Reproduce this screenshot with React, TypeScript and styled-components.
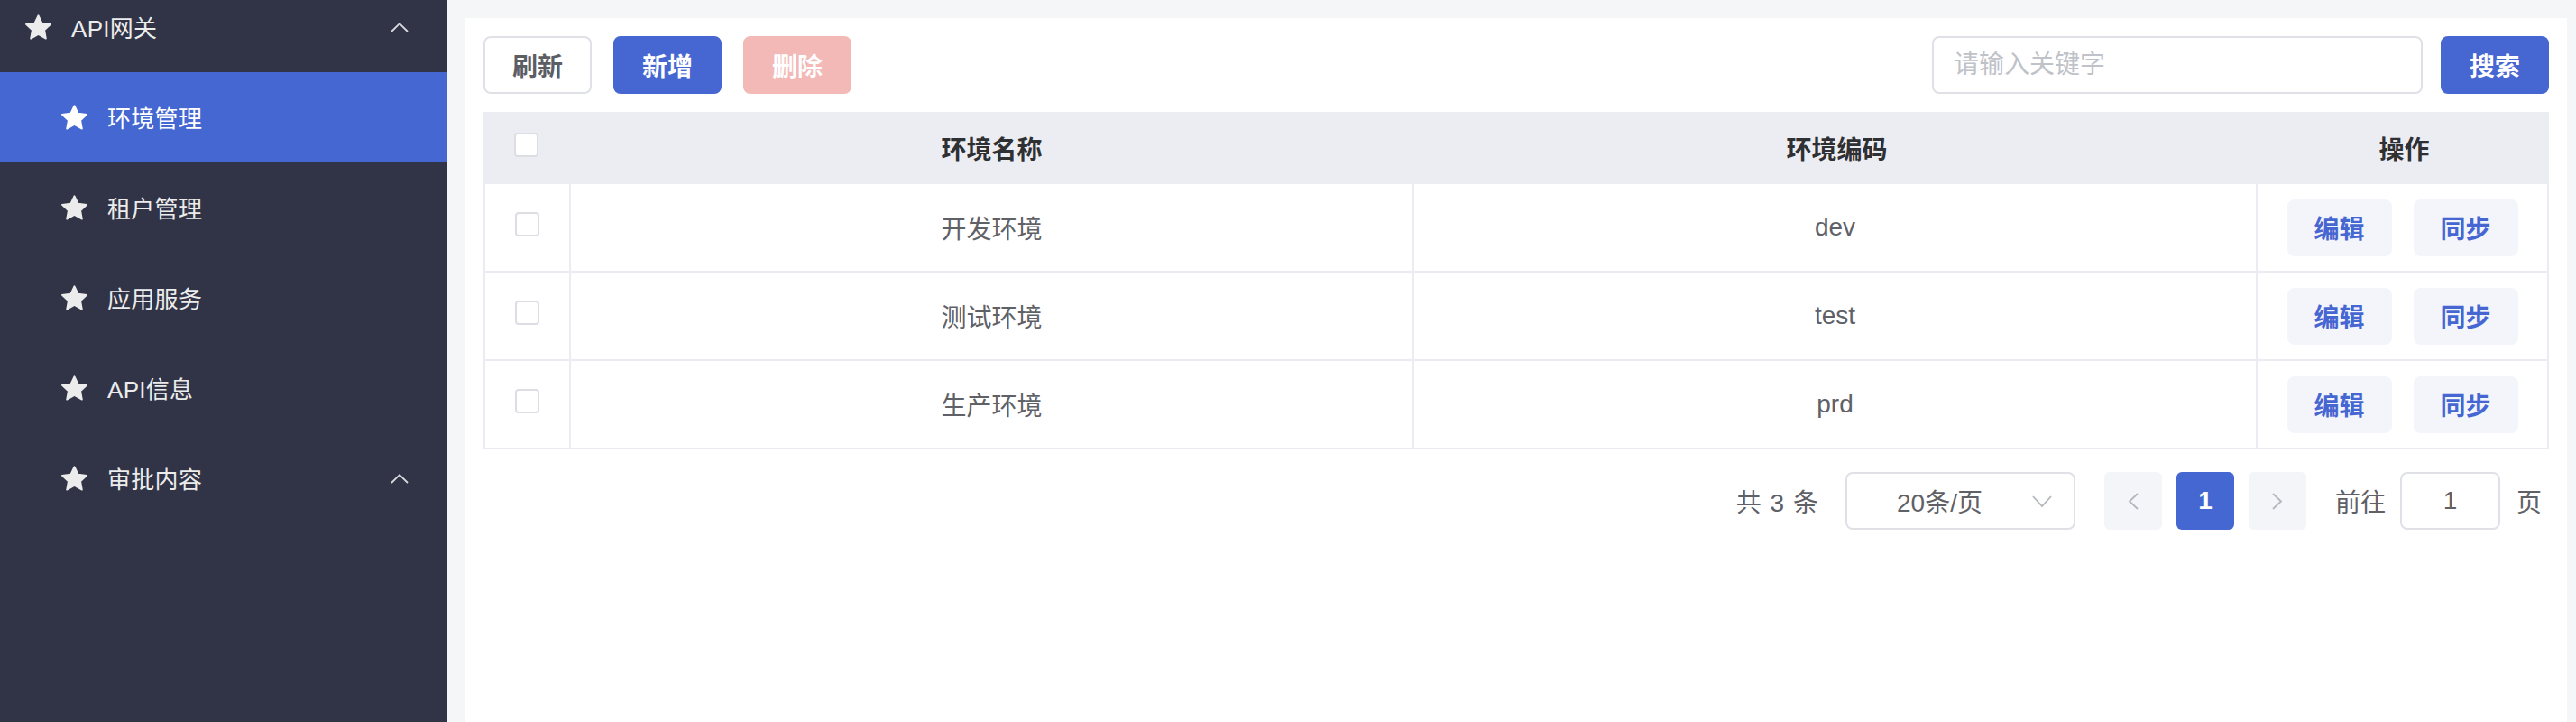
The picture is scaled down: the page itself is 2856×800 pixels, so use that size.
import React from "react";
import styled, { createGlobalStyle } from "styled-components";

const GlobalStyle = createGlobalStyle`
  html, body { margin: 0; padding: 0; }
  body {
    font-family: "Liberation Sans", "Noto Sans CJK SC", sans-serif;
    background: #f5f6f7;
  }
  * { box-sizing: border-box; }
`;

const Layout = styled.div`
  display: flex;
  width: 2856px;
  height: 800px;
  overflow: hidden;
`;

const Sidebar = styled.aside`
  width: 496px;
  flex-shrink: 0;
  background: #313446;
  overflow: hidden;
`;

const Menu = styled.ul`
  list-style: none;
  margin: -20px 0 0 0;
  padding: 0;
`;

const MenuItem = styled.li<{ $level: number; $active?: boolean }>`
  display: flex;
  align-items: center;
  height: 100px;
  padding-left: ${(p) => (p.$level === 0 ? 28 : 68)}px;
  padding-right: 43px;
  gap: 22px;
  background: ${(p) => (p.$active ? "#4567d2" : "transparent")};
  color: ${(p) => (p.$active ? "#ffffff" : "#ececec")};
  font-size: 26px;
  letter-spacing: 0.3px;
`;

const MenuLabel = styled.span`
  flex: 1;
  padding-bottom: 2px;
`;

const StarIcon = styled.svg`
  width: 29px;
  height: 28px;
  flex-shrink: 0;
`;

const Chevron = styled.svg`
  width: 20px;
  height: 11px;
  flex-shrink: 0;
`;

const Main = styled.main`
  flex: 1;
  display: flex;
  flex-direction: column;
  padding: 20px 10px 0 20px;
  background: #f5f6f7;
`;

const Card = styled.section`
  flex: 1;
  background: #ffffff;
  padding: 20px;
  display: flex;
  flex-direction: column;
`;

const Toolbar = styled.div`
  display: flex;
  justify-content: space-between;
  align-items: center;
  height: 64px;
`;

const ButtonGroup = styled.div`
  display: flex;
  gap: 24px;
`;

const Button = styled.button<{ $variant: "default" | "primary" | "danger" }>`
  width: 120px;
  height: 64px;
  border-radius: 8px;
  font-family: inherit;
  font-size: 28px;
  font-weight: 600;
  cursor: pointer;
  border: 2px solid
    ${(p) =>
      p.$variant === "default" ? "#dfe1e6" : p.$variant === "primary" ? "#4667d2" : "#f2b9b6"};
  background: ${(p) =>
    p.$variant === "default" ? "#ffffff" : p.$variant === "primary" ? "#4667d2" : "#f2b9b6"};
  color: ${(p) => (p.$variant === "default" ? "#5c5e63" : "#ffffff")};
`;

const SearchGroup = styled.div`
  display: flex;
  gap: 20px;
`;

const SearchInput = styled.input`
  width: 544px;
  height: 64px;
  border: 2px solid #dfe1e6;
  border-radius: 8px;
  padding: 0 22px;
  font-family: inherit;
  font-size: 28px;
  color: #606266;
  outline: none;
  &::placeholder { color: #bfc2c8; }
`;

const Table = styled.div`
  margin-top: 20px;
  display: flex;
  flex-direction: column;
`;

const Row = styled.div<{ $head?: boolean }>`
  display: grid;
  grid-template-columns: 95px 1fr 1fr 321px;
  height: ${(p) => (p.$head ? 80 : 98)}px;
  background: ${(p) => (p.$head ? "#ecedf2" : "#ffffff")};
  ${(p) =>
    p.$head
      ? ""
      : `border-left: 2px solid #ebecf1; border-right: 2px solid #ebecf1; border-bottom: 2px solid #ebecf1;`}
`;

const Cell = styled.div<{ $head?: boolean; $divider?: boolean }>`
  display: flex;
  align-items: center;
  justify-content: center;
  font-size: 28px;
  color: ${(p) => (p.$head ? "#2f3033" : "#5f6166")};
  font-weight: ${(p) => (p.$head ? 700 : 400)};
  border-right: ${(p) => (p.$divider ? "2px solid #ebecf1" : "none")};
`;

const CheckCell = styled(Cell)`
  padding-bottom: 8px;
`;

const Checkbox = styled.span`
  width: 27px;
  height: 27px;
  border: 2px solid #dcdee4;
  border-radius: 4px;
  background: #ffffff;
`;

const ActionGroup = styled.div`
  display: flex;
  gap: 24px;
`;

const ActionButton = styled.button`
  width: 116px;
  height: 63px;
  border: none;
  border-radius: 8px;
  background: #f4f5fa;
  color: #4667d2;
  font-family: inherit;
  font-size: 28px;
  font-weight: 600;
  cursor: pointer;
`;

const Pagination = styled.div`
  display: flex;
  justify-content: flex-end;
  align-items: center;
  margin-top: 25px;
  padding-right: 8px;
  font-size: 28px;
  color: #5f6166;
  height: 64px;
`;

const Total = styled.span`
  margin-right: 30px;
  word-spacing: 2px;
`;

const SizeSelect = styled.div`
  width: 255px;
  height: 64px;
  border: 2px solid #dfe1e6;
  border-radius: 8px;
  display: flex;
  align-items: center;
  padding-right: 24px;
  margin-right: 32px;
`;

const SelectText = styled.span`
  flex: 1;
  text-align: center;
`;

const PagerList = styled.div`
  display: flex;
  gap: 16px;
  margin-right: 32px;
`;

const PageButton = styled.div<{ $active?: boolean }>`
  width: 64px;
  height: 64px;
  border-radius: 6px;
  display: flex;
  align-items: center;
  justify-content: center;
  background: ${(p) => (p.$active ? "#4567d2" : "#f4f5f9")};
  color: ${(p) => (p.$active ? "#ffffff" : "#b8bbc1")};
  font-weight: 700;
  font-size: 28px;
`;

const JumpLabel = styled.span``;

const JumpInput = styled.div`
  width: 111px;
  height: 64px;
  border: 2px solid #dfe1e6;
  border-radius: 8px;
  display: flex;
  align-items: center;
  justify-content: center;
  margin: 0 18px 0 16px;
`;

const Star = () => (
  <StarIcon viewBox="0.9 0.7 22.2 20.9">
    <polygon
      points="12,1.4 15.1,7.8 22.4,8.7 17.1,13.7 18.4,20.8 12,17.3 5.6,20.8 6.9,13.7 1.6,8.7 8.9,7.8"
      fill="currentColor"
      stroke="currentColor"
      strokeWidth="1.4"
      strokeLinejoin="round"
    />
  </StarIcon>
);

const UpChevron = () => (
  <Chevron viewBox="0 0 20 11">
    <polyline points="1,10 10,1.2 19,10" fill="none" stroke="#d8d9de" strokeWidth="1.8" />
  </Chevron>
);

const menu = [
  { label: "API网关", level: 0, arrow: true },
  { label: "环境管理", level: 1, active: true },
  { label: "租户管理", level: 1 },
  { label: "应用服务", level: 1 },
  { label: "API信息", level: 1 },
  { label: "审批内容", level: 1, arrow: true },
];

const rows = [
  { name: "开发环境", code: "dev" },
  { name: "测试环境", code: "test" },
  { name: "生产环境", code: "prd" },
];

export default function App() {
  return (
    <>
      <GlobalStyle />
      <Layout>
        <Sidebar>
          <Menu>
            {menu.map((m) => (
              <MenuItem key={m.label} $level={m.level} $active={m.active}>
                <Star />
                <MenuLabel>{m.label}</MenuLabel>
                {m.arrow && <UpChevron />}
              </MenuItem>
            ))}
          </Menu>
        </Sidebar>
        <Main>
          <Card>
            <Toolbar>
              <ButtonGroup>
                <Button $variant="default">刷新</Button>
                <Button $variant="primary">新增</Button>
                <Button $variant="danger">删除</Button>
              </ButtonGroup>
              <SearchGroup>
                <SearchInput placeholder="请输入关键字" />
                <Button $variant="primary">搜索</Button>
              </SearchGroup>
            </Toolbar>
            <Table>
              <Row $head>
                <CheckCell $head>
                  <Checkbox />
                </CheckCell>
                <Cell $head>环境名称</Cell>
                <Cell $head>环境编码</Cell>
                <Cell $head>操作</Cell>
              </Row>
              {rows.map((r) => (
                <Row key={r.code}>
                  <CheckCell $divider>
                    <Checkbox />
                  </CheckCell>
                  <Cell $divider>{r.name}</Cell>
                  <Cell $divider>{r.code}</Cell>
                  <Cell>
                    <ActionGroup>
                      <ActionButton>编辑</ActionButton>
                      <ActionButton>同步</ActionButton>
                    </ActionGroup>
                  </Cell>
                </Row>
              ))}
            </Table>
            <Pagination>
              <Total>共 3 条</Total>
              <SizeSelect>
                <SelectText>20条/页</SelectText>
                <svg width="22" height="13" viewBox="0 0 22 13">
                  <polyline points="1,1 11,12 21,1" fill="none" stroke="#b3b6bd" strokeWidth="1.8" />
                </svg>
              </SizeSelect>
              <PagerList>
                <PageButton>
                  <svg width="12" height="19" viewBox="0 0 12 19">
                    <polyline points="11,1 2,9.5 11,18" fill="none" stroke="#b3b6bd" strokeWidth="1.8" />
                  </svg>
                </PageButton>
                <PageButton $active>1</PageButton>
                <PageButton>
                  <svg width="12" height="19" viewBox="0 0 12 19">
                    <polyline points="1,1 10,9.5 1,18" fill="none" stroke="#b3b6bd" strokeWidth="1.8" />
                  </svg>
                </PageButton>
              </PagerList>
              <JumpLabel>前往</JumpLabel>
              <JumpInput>1</JumpInput>
              <JumpLabel>页</JumpLabel>
            </Pagination>
          </Card>
        </Main>
      </Layout>
    </>
  );
}
